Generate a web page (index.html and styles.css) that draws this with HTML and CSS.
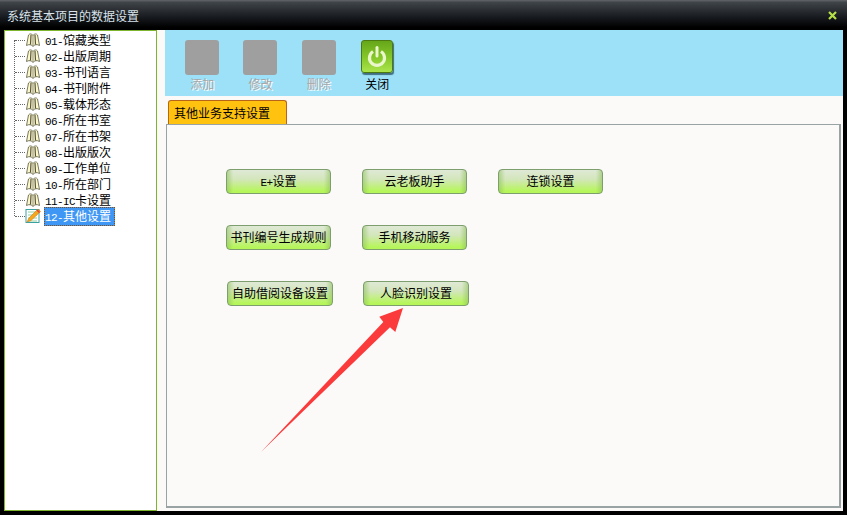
FILE: index.html
```html
<!DOCTYPE html>
<html lang="zh-CN">
<head>
    <meta charset="UTF-8">
    <title>系统基本项目的数据设置</title>
    <link rel="stylesheet" href="styles.css">
</head>
<body>
    <svg class="defs" width="0" height="0">
        <symbol id="book" viewBox="0 0 16 16">
            <path d="M8 3.500C6.500 1.500 4.500 1.500 3.500 3L1.500 13.500C4 12 6.500 12.500 8 14.500C9.500 12.500 12 12 14.500 13.500L12.500 3C11.500 1.500 9.500 1.500 8 3.500Z" fill="#fdf8cc" stroke="#55553c" stroke-width=".8"/>
            <path d="M6 3L5.500 12.500M10 3L10.500 12.500" stroke="#55553c" stroke-width="1.200" fill="none"/>
            <path d="M8 3.500V14" stroke="#8d8d78" fill="none"/>
        </symbol>
    </svg>

    <div class="window">
        <div class="titlebar">
            <span>系统基本项目的数据设置</span>
            <svg class="close" width="9" height="9" viewBox="0 0 9 9">
                <path d="M1 1L8 8M8 1L1 8" stroke="#b5e048" stroke-width="2.200"/>
            </svg>
        </div>

        <div class="main">
            <div class="tree">
                <div class="tree-line"></div>
                <div class="node"><svg class="node-icon"><use href="#book"/></svg><span class="node-label"><i>01-</i>馆藏类型</span></div>
                <div class="node"><svg class="node-icon"><use href="#book"/></svg><span class="node-label"><i>02-</i>出版周期</span></div>
                <div class="node"><svg class="node-icon"><use href="#book"/></svg><span class="node-label"><i>03-</i>书刊语言</span></div>
                <div class="node"><svg class="node-icon"><use href="#book"/></svg><span class="node-label"><i>04-</i>书刊附件</span></div>
                <div class="node"><svg class="node-icon"><use href="#book"/></svg><span class="node-label"><i>05-</i>载体形态</span></div>
                <div class="node"><svg class="node-icon"><use href="#book"/></svg><span class="node-label"><i>06-</i>所在书室</span></div>
                <div class="node"><svg class="node-icon"><use href="#book"/></svg><span class="node-label"><i>07-</i>所在书架</span></div>
                <div class="node"><svg class="node-icon"><use href="#book"/></svg><span class="node-label"><i>08-</i>出版版次</span></div>
                <div class="node"><svg class="node-icon"><use href="#book"/></svg><span class="node-label"><i>09-</i>工作单位</span></div>
                <div class="node"><svg class="node-icon"><use href="#book"/></svg><span class="node-label"><i>10-</i>所在部门</span></div>
                <div class="node"><svg class="node-icon"><use href="#book"/></svg><span class="node-label"><i>11-IC</i>卡设置</span></div>
                <div class="node">
                    <svg class="node-icon" viewBox="0 0 16 16">
                        <rect x="1" y="1.500" width="13" height="13" fill="#fff" stroke="#3aa0a0"/>
                        <path d="M3 4H12M3 7H12M3 10H12M3 13H12" stroke="#8fd0a0"/>
                        <path d="M2 14L4 10L13 1L15.500 3.500L6 12.500Z" fill="#f6a81c" stroke="#d07a10" stroke-width=".6"/>
                        <path d="M12 2L14.500 4.500" stroke="#e04040" stroke-width="1.500"/>
                    </svg>
                    <span class="node-label selected"><i>12-</i>其他设置</span>
                </div>
            </div>

            <div class="content">
                <div class="toolbar">
                    <div class="tool disabled"><div class="tool-icon"></div><span>添加</span></div>
                    <div class="tool disabled"><div class="tool-icon"></div><span>修改</span></div>
                    <div class="tool disabled"><div class="tool-icon"></div><span>删除</span></div>
                    <div class="tool">
                        <div class="tool-icon power">
                            <svg width="20" height="21" viewBox="0 0 20 21">
                                <path d="M6 5.500A7.500 7.500 0 1 0 14 5.500" fill="none" stroke="#eaf6cc" stroke-width="3.200"/>
                                <path d="M10 1.500V10" stroke="#eaf6cc" stroke-width="3" stroke-linecap="round"/>
                            </svg>
                        </div>
                        <span>关闭</span>
                    </div>
                </div>

                <div class="tabs"><div class="tab">其他业务支持设置</div></div>

                <div class="panel">
                    <div class="btn-row">
                        <button class="btn"><i>E+</i>设置</button>
                        <button class="btn">云老板助手</button>
                        <button class="btn">连锁设置</button>
                    </div>
                    <div class="btn-row">
                        <button class="btn">书刊编号生成规则</button>
                        <button class="btn">手机移动服务</button>
                    </div>
                    <div class="btn-row last">
                        <button class="btn">自助借阅设备设置</button>
                        <button class="btn">人脸识别设置</button>
                    </div>
                    <!-- annotation drawn over the panel -->
                    <svg class="arrow" width="160" height="160" viewBox="0 0 160 160">
                        <path d="M1 150L123.300 20L119.300 14.700L143 6L135.300 30L130 25.300Z" fill="#fb3b3b"/>
                    </svg>
                </div>
            </div>
        </div>
    </div>
</body>
</html>
```

FILE: styles.css
```css
html, body {
    margin: 0;
    padding: 0;
}
body {
    width: 847px;
    height: 515px;
    overflow: hidden;
    background-color: #000;
    font-family: "Noto Sans CJK SC", "Liberation Sans", sans-serif;
    font-size: 12px;
    color: #000;
}
i {
    font-family: "Liberation Mono", monospace;
    font-size: 11px;
    font-style: normal;
    letter-spacing: -.6px;
}
.defs {
    display: block;
    height: 0;
}
.window {
    display: flex;
    flex-direction: column;
    height: 511px;
    padding: 0 4px 4px 4px;
}
.titlebar {
    display: flex;
    align-items: center;
    justify-content: space-between;
    flex: none;
    height: 30px;
    margin: 0 -4px;
    padding: 0 10px 0 7px;
    box-sizing: border-box;
    background: linear-gradient(#63676c 0, #3f4449 8%, #15181c 60%, #000 92%);
    color: #d9e2ea;
}
.close {
    flex: none;
}
.main {
    display: flex;
    flex: 1;
    min-height: 0;
    background-color: #fcfaf9;
}
.tree {
    position: relative;
    flex: none;
    width: 153px;
    padding-top: 1px;
    border: 1px solid #7fb52e;
    box-sizing: border-box;
    background-color: #fff;
}
.tree-line {
    position: absolute;
    left: 9px;
    top: 9px;
    height: 176px;
    border-left: 1px dotted #666;
}
.node {
    display: flex;
    align-items: center;
    height: 16px;
    padding-left: 10px;
    white-space: nowrap;
}
.node::before {
    content: "";
    width: 10px;
    border-top: 1px dotted #666;
}
.node-icon {
    flex: none;
    width: 16px;
    height: 16px;
}
.node-label {
    margin-left: 3px;
    padding: 1px 1px 0;
    line-height: 15px;
}
.selected {
    width: 71px;
    box-sizing: border-box;
    outline: 1px dotted #8a4a10;
    outline-offset: -1px;
    background-color: #3f97f5;
    color: #fff;
}
.content {
    display: flex;
    flex: 1;
    flex-direction: column;
    min-width: 0;
    padding-left: 8px;
}
.toolbar {
    display: flex;
    flex: none;
    height: 66px;
    padding: 10px 0 0 8px;
    box-sizing: border-box;
    background-color: #9de1f9;
}
.tool {
    display: flex;
    flex-direction: column;
    align-items: center;
    width: 58.330px;
    line-height: 16px;
}
.tool-icon {
    width: 34px;
    height: 35px;
    margin-bottom: 1px;
    border-radius: 3px;
    background-color: #9f9f9f;
}
.disabled {
    color: #a8a8a8;
    text-shadow: 1px 1px 0 #fff;
}
.power {
    display: flex;
    align-items: center;
    justify-content: center;
    width: 30px;
    height: 31px;
    margin-bottom: 3px;
    border: 1px solid #4c7a10;
    box-sizing: content-box;
    background: linear-gradient(#66a61a, #86c82a 55%, #aae44c);
    box-shadow: 1px 2px 1px #3f6f80;
}
.tabs {
    display: flex;
    flex: none;
    height: 28px;
    padding: 4px 0 0 3px;
    box-sizing: border-box;
}
.tab {
    width: 119px;
    padding-left: 5px;
    border: 1px solid #b8651a;
    border-bottom: none;
    border-radius: 3px 3px 0 0;
    box-sizing: border-box;
    background-color: #ffc20e;
    line-height: 24px;
}
.panel {
    position: relative;
    flex: 1;
    margin: 0 2px 3px 1px;
    padding-top: 44px;
    border: 1px solid #9aa3a3;
    border-right-width: 2px;
    border-bottom-width: 2px;
    box-sizing: border-box;
    background-color: #fcfaf9;
}
.btn-row {
    display: flex;
    gap: 31px;
    height: 25px;
    margin-bottom: 31px;
    padding-left: 59px;
}
.btn {
    width: 105px;
    height: 25px;
    padding: 0 0 2px;
    border: 1px solid #7d9f6d;
    border-radius: 4px;
    box-sizing: border-box;
    background:
        linear-gradient(90deg, rgba(140, 190, 90, .55), transparent 6%, transparent 94%, rgba(140, 190, 90, .55)),
        linear-gradient(#dfe9d6 0, #d3e6bb 40%, #b6f65a 92%);
    font: inherit;
    color: #000;
}
.last {
    gap: 30px;
    padding-left: 60px;
}
.last .btn {
    width: 106px;
}
.arrow {
    position: absolute;
    left: 93px;
    top: 177px;
}
```
